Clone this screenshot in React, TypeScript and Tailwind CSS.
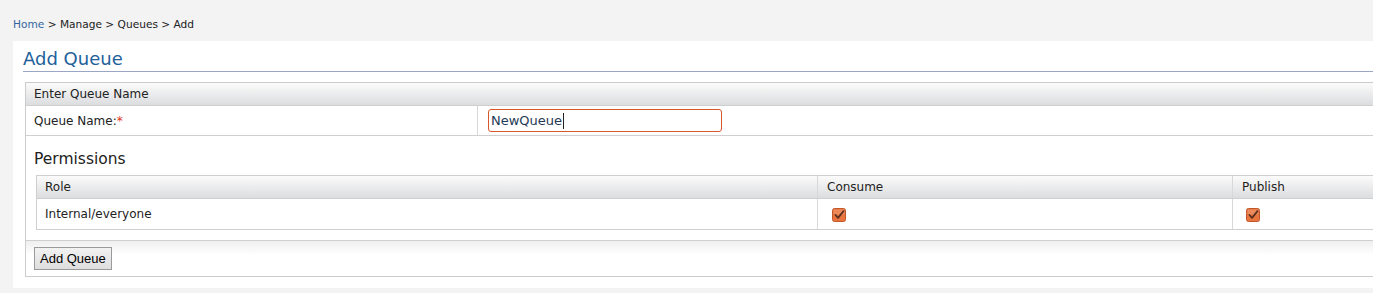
import React from "react";

function Check() {
  return (
    <svg width="14" height="14" viewBox="0 0 14 14" className="block">
      <rect x="0.5" y="0.5" width="13" height="13" rx="2" fill="#e8743f" stroke="#c4572a" />
      <rect x="1.5" y="1.5" width="11" height="5" rx="1" fill="#ef9a6e" opacity="0.6" />
      <path d="M3.5 7 L6 9.8 L11.5 3.2" fill="none" stroke="#5a3020" strokeWidth="1.8" strokeLinecap="round" strokeLinejoin="round" />
    </svg>
  );
}

export default function App() {
  const font = { fontFamily: '"DejaVu Sans", Verdana, sans-serif' };
  return (
    <div className="w-[1373px] h-[293px] overflow-hidden bg-[#f3f3f3]" style={font}>
      <div className="w-[1440px]">
        <div className="h-[41px] pl-[13px] pt-[17px] text-[10.6px] leading-[14px] text-[#222]">
          <span className="text-[#3366a0]">Home</span> &gt; Manage &gt; Queues &gt; Add
        </div>
        <div className="ml-[13px] bg-white pl-[10px] pt-[7px] pb-[11px]">
          <h1 className="text-[18px] leading-[22px] text-[#23619b] pb-[1px] border-b border-[#9aa6c4]">
            Add Queue
          </h1>
          <div className="mt-[10px] ml-[2px] border border-[#cccccc]">
            <div className="h-[23px] pl-[8px] flex items-center text-[12px] text-[#222] bg-gradient-to-b from-[#fbfbfb] to-[#dcdddf] border-b border-[#cfcfcf]">
              Enter Queue Name
            </div>
            <div className="flex h-[30px] border-b border-[#cfcfcf]">
              <div className="w-[452px] border-r border-[#d8d8d8] pl-[8px] flex items-center text-[12px] text-[#222]">
                Queue Name:<span className="text-[#e03020]">*</span>
              </div>
              <div className="pl-[10px] flex items-center">
                <div className="w-[234px] h-[23px] border border-[#d9582b] rounded-[3px] flex items-center pl-[2px] text-[13px] text-[#1f3a55]">
                  NewQueue<span className="inline-block w-px h-[16px] bg-[#222] ml-[1px]" />
                </div>
              </div>
            </div>
            <div className="pl-[8px] pt-[14px] text-[15.5px] leading-[18px] text-[#222]">Permissions</div>
            <div className="ml-[10px] mt-[7px] border border-[#cfcfcf] text-[12px] text-[#222]">
              <div className="flex h-[23px] bg-gradient-to-b from-[#fbfbfb] to-[#dcdddf] border-b border-[#cfcfcf]">
                <div className="w-[781px] border-r border-[#d8d8d8] pl-[8px] flex items-center">Role</div>
                <div className="w-[415px] border-r border-[#d8d8d8] pl-[9px] flex items-center">Consume</div>
                <div className="pl-[9px] flex items-center">Publish</div>
              </div>
              <div className="flex h-[30px]">
                <div className="w-[781px] border-r border-[#d8d8d8] pl-[8px] flex items-center">Internal/everyone</div>
                <div className="w-[415px] border-r border-[#d8d8d8] pl-[14px] flex items-center pt-[1px]"><Check /></div>
                <div className="pl-[13px] flex items-center pt-[1px]"><Check /></div>
              </div>
            </div>
            <div className="mt-[10px] border-t border-[#cfcfcf] h-[36px] bg-gradient-to-b from-[#efefef] to-white to-[40%] pl-[8px] flex items-center">
              <button
                className="h-[23px] px-[5px] border border-[#9a9a9a] bg-gradient-to-b from-[#f2f2f2] to-[#dedede] text-[13px] text-black"
                style={{ fontFamily: '"Liberation Sans", Arial, sans-serif' }}
              >
                Add Queue
              </button>
            </div>
          </div>
        </div>
      </div>
    </div>
  );
}
